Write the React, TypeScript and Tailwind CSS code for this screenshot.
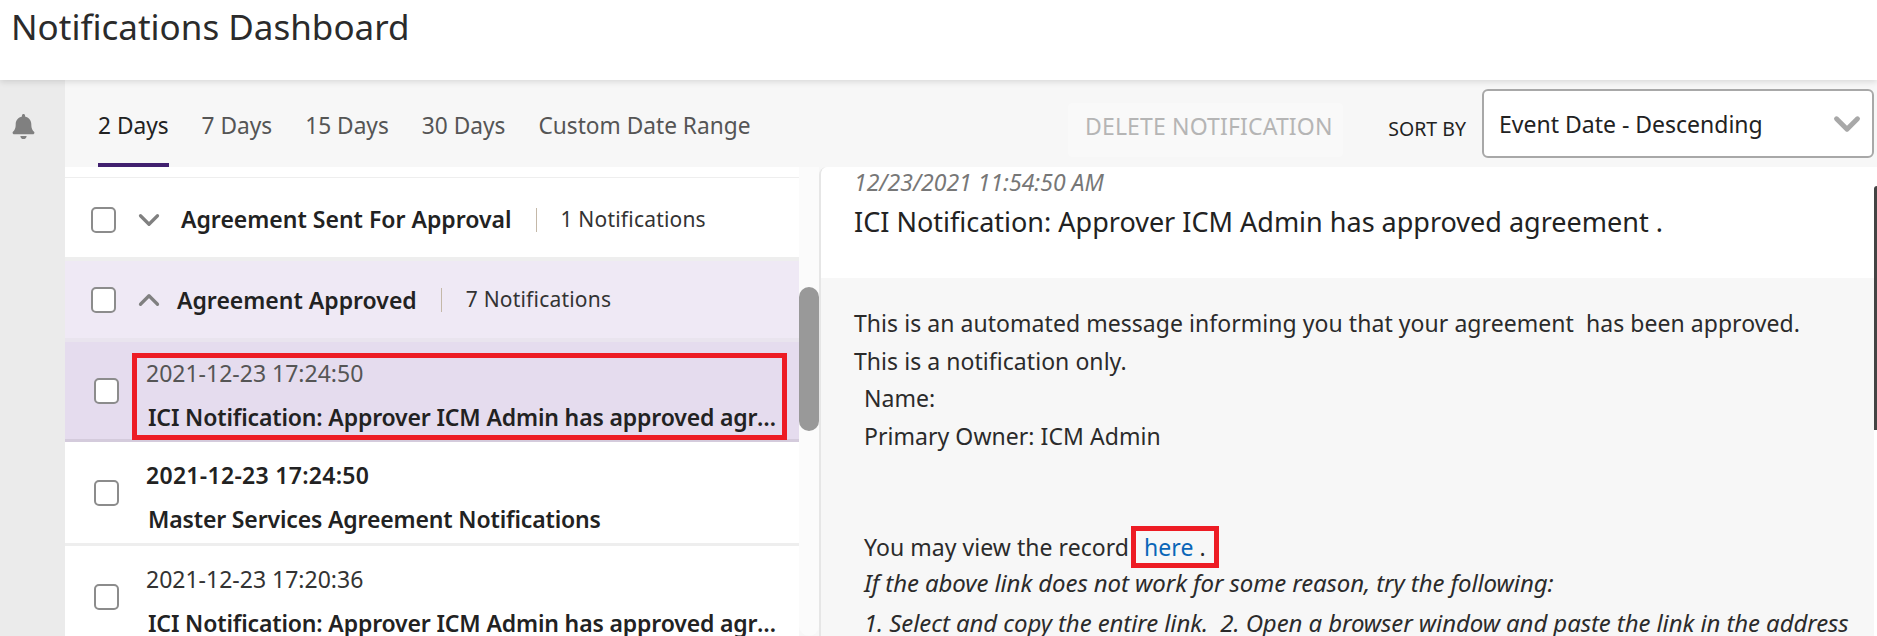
import { ChevronDown, ChevronUp } from "lucide-react";
import { FaBell } from "react-icons/fa";

const Check = () => (
  <span className="block w-[25px] h-[26px] shrink-0 rounded-[5px] border-2 border-[#8c8c8c] bg-white" />
);

const GroupRow = ({ title, count, open }: { title: string; count: string; open?: boolean }) => (
  <div className={`flex items-center pl-[26px] ${open ? "h-[81px] pt-[1px] bg-[#efe9f5] border-b-[4px] border-[#e9e4ee]" : "h-[83px] pt-[4px] bg-white border-b-[4px] border-[#eeeeee]"}`}>
    <Check />
    {open ? (
      <ChevronUp size={34} strokeWidth={2.3} className="ml-[16px] text-[#808080]" />
    ) : (
      <ChevronDown size={34} strokeWidth={2.3} className="ml-[16px] text-[#808080]" />
    )}
    <span className={`${open ? "ml-[11px]" : "ml-[15px]"} text-[23px] font-semibold text-[#222222]`}>{title}</span>
    <span className="ml-[24px] w-px h-[24px] bg-[#c4b8a8]" />
    <span className="ml-[24px] text-[21px] tracking-[0.2px] text-[#333333]">{count}</span>
  </div>
);

const ItemRow = ({
  date,
  text,
  dateClass,
  bg,
  selected,
}: {
  date: string;
  text: string;
  dateClass: string;
  bg: string;
  selected?: boolean;
}) => (
  <div className={`flex items-center pl-[29px] border-b-[3px] ${selected ? "h-[100px] border-[#d4cbdc]" : "h-[104px] border-[#eeeeee]"} ${bg}`}>
    <Check />
    <div
      className={`ml-[13px] w-[655px] h-[87px] self-start mt-[11px] border-[5px] ${selected ? "border-[#ed1c24]" : "border-transparent pt-[2px]"}`}
    >
      <div className={`pl-[9px] text-[23px] leading-[30px] ${dateClass}`}>{date}</div>
      <div className="pl-[11px] mt-[12px] text-[23px] leading-[34px] font-semibold tracking-[-0.15px] truncate text-[#222222]">
        {text}
      </div>
    </div>
  </div>
);

const Line = ({ children, className = "" }: { children: React.ReactNode; className?: string }) => (
  <div className={`h-[37.5px] leading-[37.5px] whitespace-nowrap ${className}`}>{children}</div>
);

export default function App() {
  const approved = "ICI Notification: Approver ICM Admin has approved agreement .";
  return (
    <div className="w-[1877px] h-[636px] overflow-hidden flex flex-col bg-white font-['Noto_Sans',sans-serif] text-[#222222]">
      <header className="h-[80px] shrink-0 pl-[11px] pt-[2px] bg-white shadow-[0_2px_6px_rgba(0,0,0,0.12)] relative z-10">
        <h1 className="text-[35px] leading-[50px] text-[#2b2b2b]">Notifications Dashboard</h1>
      </header>

      <div className="flex flex-1 min-h-0">
        <aside className="w-[65px] shrink-0 bg-[#ebebeb] pt-[34px] pl-[11px]">
          <FaBell size={25} className="text-[#808080]" />
        </aside>

        <main className="flex-1 min-w-0 flex flex-col bg-[#f7f7f7]">
          <div className="h-[87px] shrink-0 flex">
            <nav className="flex pl-[33px] gap-[33px] text-[22.7px] text-[#555555]">
              <a className="h-[87px] pt-[29px] border-b-[4px] border-[#41206f] text-[#222222]">2 Days</a>
              <a className="pt-[29px]">7 Days</a>
              <a className="pt-[29px]">15 Days</a>
              <a className="pt-[29px]">30 Days</a>
              <a className="pt-[29px]">Custom Date Range</a>
            </nav>
            <div className="ml-auto flex items-center pr-[3px]">
              <button className="w-[275px] h-[54px] mt-[12px] pb-[6px] pl-[6px] rounded bg-[#f9f9f9] text-[23px] tracking-[0.15px] text-[#b5b5b5]" type="button">
                DELETE NOTIFICATION
              </button>
              <span className="ml-[45px] mt-[10px] text-[19.5px] text-[#222222]">SORT BY</span>
              <div className="ml-[16px] w-[392px] h-[69px] flex items-center justify-between pl-[15px] pr-[4px] rounded-[6px] border-2 border-[#a8a8a8] bg-white text-[23px]">
                <span className="mt-[1px]">Event Date - Descending</span>
                <ChevronDown size={42} strokeWidth={2.8} className="text-[#a8a8a8]" />
              </div>
            </div>
          </div>

          <div className="flex-1 min-h-0 flex">
            <section className="w-[734px] shrink-0 bg-white pt-[10px] overflow-hidden">
              <div className="h-px bg-[#eeeeee]" />
              <GroupRow title="Agreement Sent For Approval" count="1 Notifications" />
              <GroupRow title="Agreement Approved" count="7 Notifications" open />
              <ItemRow
                date="2021-12-23 17:24:50"
                text={approved}
                dateClass="text-[#555555]"
                bg="bg-[#e5dcee]"
                selected
              />
              <ItemRow
                date="2021-12-23 17:24:50"
                text="Master Services Agreement Notifications"
                dateClass="font-semibold tracking-[0.3px] text-[#222222]"
                bg="bg-white"
              />
              <ItemRow date="2021-12-23 17:20:36" text={approved} dateClass="text-[#333333]" bg="bg-white" />
            </section>

            <div className="w-[20px] shrink-0 bg-[#fbfbfb] flex flex-col rounded-b-[10px]">
              <div className="h-[120px] shrink-0" />
              <div className="w-[20px] h-[144px] rounded-[10px] bg-[#999999]" />
            </div>

            <section className="flex-1 min-w-0 flex overflow-hidden border-l-2 border-[#e6e6e6] rounded-tl-[8px]">
              <div className="flex-1 min-w-0 flex flex-col">
                <div className="h-[111px] shrink-0 bg-white pl-[33px]">
                  <div className="text-[23px] leading-[30px] italic text-[#777777]">12/23/2021 11:54:50 AM</div>
                  <div className="mt-[7px] text-[27px] leading-[36px] text-[#222222]">{approved}</div>
                </div>
                <div className="flex-1 pl-[33px] pt-[27px] text-[23px] tracking-[0.05px] text-[#2b2b2b]">
                  <Line>This is an automated message informing you that your agreement&nbsp; has been approved.</Line>
                  <Line>This is a notification only.</Line>
                  <div className="pl-[10px]">
                    <Line>Name:</Line>
                    <Line>Primary Owner: ICM Admin</Line>
                    <div className="h-[71px]" />
                    <Line>
                      You may view the record
                      <span className="inline-block ml-[2px] px-[8px] leading-[32px] border-[5px] border-[#ed1c24]">
                        <span className="text-[#0a66b8]">here</span> .
                      </span>
                    </Line>
                    <Line className="italic text-[24px] tracking-[-0.1px]">If the above link does not work for some reason, try the following:</Line>
                    <Line className="mt-[3px] italic text-[24px] tracking-[-0.1px]">1. Select and copy the entire link.&nbsp; 2. Open a browser window and paste the link in the address</Line>
                  </div>
                </div>
              </div>
              <div className="w-[3px] shrink-0 bg-white">
                <div className="mt-[19px] h-[244px] bg-[#444444] rounded-tl-[3px]" />
              </div>
            </section>
          </div>
        </main>
      </div>
    </div>
  );
}
